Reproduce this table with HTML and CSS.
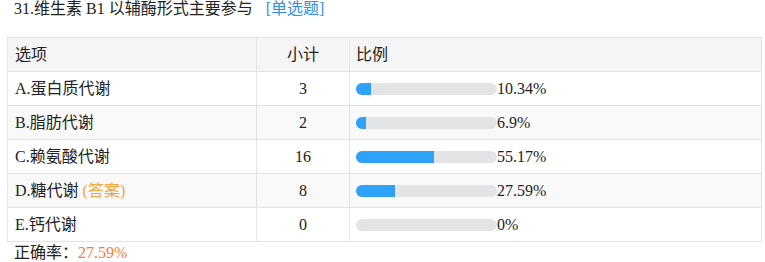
FILE: index.html
```html
<!DOCTYPE html>
<html>
<head>
<meta charset="utf-8">
<link rel="stylesheet" href="styles.css">
</head>
<body>
<div class="q">
  <div class="title">31.维生素 B1 以辅酶形式主要参与 <span class="type">[单选题]</span></div>
  <table class="stats">
    <colgroup><col class="c1"><col class="c2"><col class="c3"></colgroup>
    <thead>
      <tr><th class="opt">选项</th><th class="cnt">小计</th><th class="pct">比例</th></tr>
    </thead>
    <tbody>
      <tr><td class="opt">A.蛋白质代谢</td><td class="cnt">3</td><td class="pct"><div class="barwrap"><div class="bar"><div class="fill" style="width:10.34%"></div></div><span>10.34%</span></div></td></tr>
      <tr><td class="opt">B.脂肪代谢</td><td class="cnt">2</td><td class="pct"><div class="barwrap"><div class="bar"><div class="fill" style="width:6.9%"></div></div><span>6.9%</span></div></td></tr>
      <tr><td class="opt">C.赖氨酸代谢</td><td class="cnt">16</td><td class="pct"><div class="barwrap"><div class="bar"><div class="fill" style="width:55.17%"></div></div><span>55.17%</span></div></td></tr>
      <tr><td class="opt">D.糖代谢 <span class="ans">(答案)</span></td><td class="cnt">8</td><td class="pct"><div class="barwrap"><div class="bar"><div class="fill" style="width:27.59%"></div></div><span>27.59%</span></div></td></tr>
      <tr><td class="opt">E.钙代谢</td><td class="cnt">0</td><td class="pct"><div class="barwrap"><div class="bar"><div class="fill" style="width:0%"></div></div><span>0%</span></div></td></tr>
    </tbody>
  </table>
  <div class="rate">正确率：<span class="rateval">27.59%</span></div>
</div>
</body>
</html>
```
FILE: styles.css
```css
html, body { margin: 0; padding: 0; background: #fff; }
body {
  font-family: "Liberation Serif", "Noto Sans CJK SC", serif;
  font-size: 16px;
  color: #222;
}
.q { padding: 0 5px 0 7px; }
.title { line-height: 18px; padding-left: 7px; }
.type { color: #2f8ee8; margin-left: 9px; }
.stats {
  margin-top: 19px;
  border-collapse: collapse;
  width: 754px;
  table-layout: fixed;
}
.c1 { width: 249px; }
.c2 { width: 93px; }
.c3 { width: 412px; }
.stats th, .stats td {
  border: 1px solid #e3e3e3;
  height: 33px;
  padding: 0 7px;
  font-weight: normal;
  text-align: left;
  vertical-align: middle;
  line-height: 20px;
}
.stats .pct { padding-left: 6px; }
.stats thead tr { background: #f5f5f5; }
.stats tbody tr:nth-child(even) { background: #f9f9f9; }
.stats .cnt { text-align: center; }
.barwrap { display: flex; align-items: center; }
.bar {
  width: 141px;
  height: 12px;
  background: #e3e4e6;
  border-radius: 6px;
  overflow: hidden;
  flex: none;
}
.fill { height: 100%; background: #2ea1f8; }
.ans { color: #f5a33b; }
.rate { padding-left: 7px; line-height: 18px; margin-top: 2px; }
.rateval { color: #f87d3a; }
```
